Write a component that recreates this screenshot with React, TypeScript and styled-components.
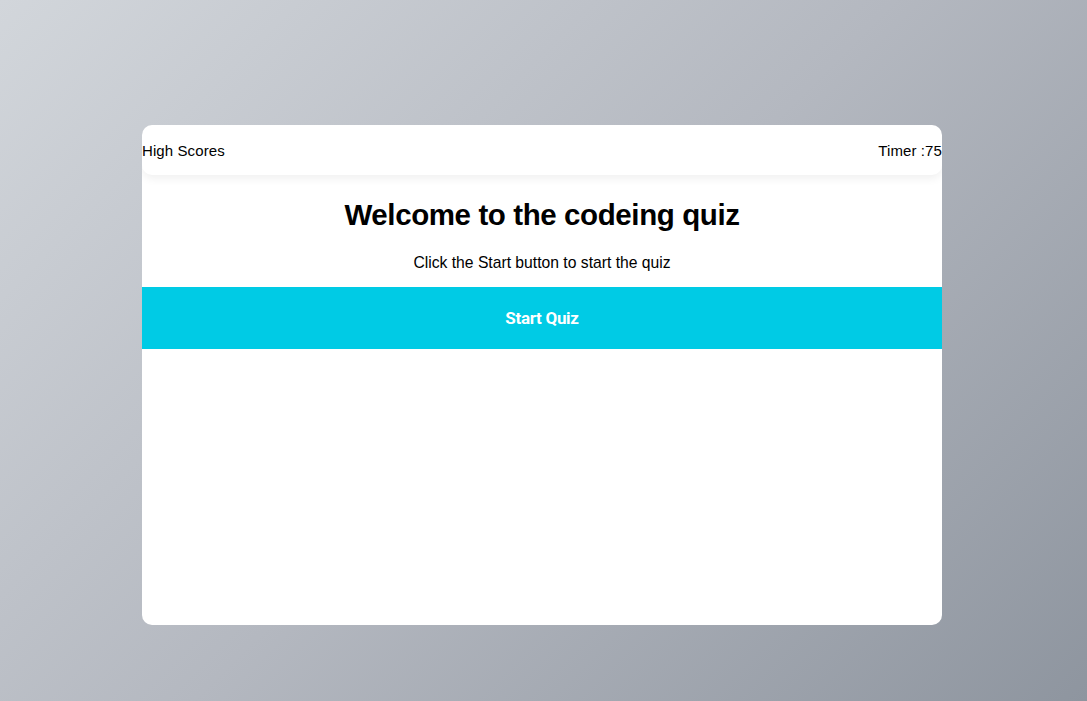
import React from "react";
import styled, { createGlobalStyle } from "styled-components";

const GlobalStyle = createGlobalStyle`
  html, body { margin: 0; padding: 0; }
  body {
    min-height: 701px;
    background: linear-gradient(135deg, #d2d6db 0%, #b4b8c0 50%, #8e959f 100%);
    font-family: "Liberation Sans", Arial, sans-serif;
  }
`;

const Page = styled.div`
  min-height: 701px;
  box-sizing: border-box;
  padding-top: 125px;
  display: flex;
  justify-content: center;
  align-items: flex-start;
`;

const Card = styled.main`
  width: 800px;
  height: 500px;
  margin-left: -3px;
  background: #ffffff;
  border-radius: 10px;
  display: flex;
  flex-direction: column;
  overflow: hidden;
`;

const Header = styled.header`
  height: 50px;
  display: flex;
  justify-content: space-between;
  align-items: center;
  border-radius: 10px;
  box-shadow: 0 4px 8px rgba(0, 0, 0, 0.06);
  font-size: 15px;
  color: #000;
`;

const HeaderText = styled.span`
  letter-spacing: 0.1px;
`;

const Title = styled.h1`
  margin: 22px 0 0;
  text-align: center;
  font-size: 29.5px;
  font-weight: 700;
  letter-spacing: -0.4px;
  color: #000;
  line-height: 36px;
`;

const Subtitle = styled.p`
  margin: 20px 0 0;
  text-align: center;
  font-size: 15.7px;
  color: #000;
  line-height: 20px;
`;

const StartButton = styled.button`
  margin-top: 14px;
  height: 62px;
  width: 100%;
  border: none;
  background: #00cbe5;
  color: #ffffff;
  font-family: Roboto, "Liberation Sans", sans-serif;
  font-weight: 700;
  font-size: 17px;
  letter-spacing: -0.3px;
  cursor: pointer;
`;

export default function App() {
  return (
    <>
      <GlobalStyle />
      <Page>
        <Card>
          <Header>
            <HeaderText>High Scores</HeaderText>
            <HeaderText>Timer :75</HeaderText>
          </Header>
          <Title>Welcome to the codeing quiz</Title>
          <Subtitle>Click the Start button to start the quiz</Subtitle>
          <StartButton>Start Quiz</StartButton>
        </Card>
      </Page>
    </>
  );
}
